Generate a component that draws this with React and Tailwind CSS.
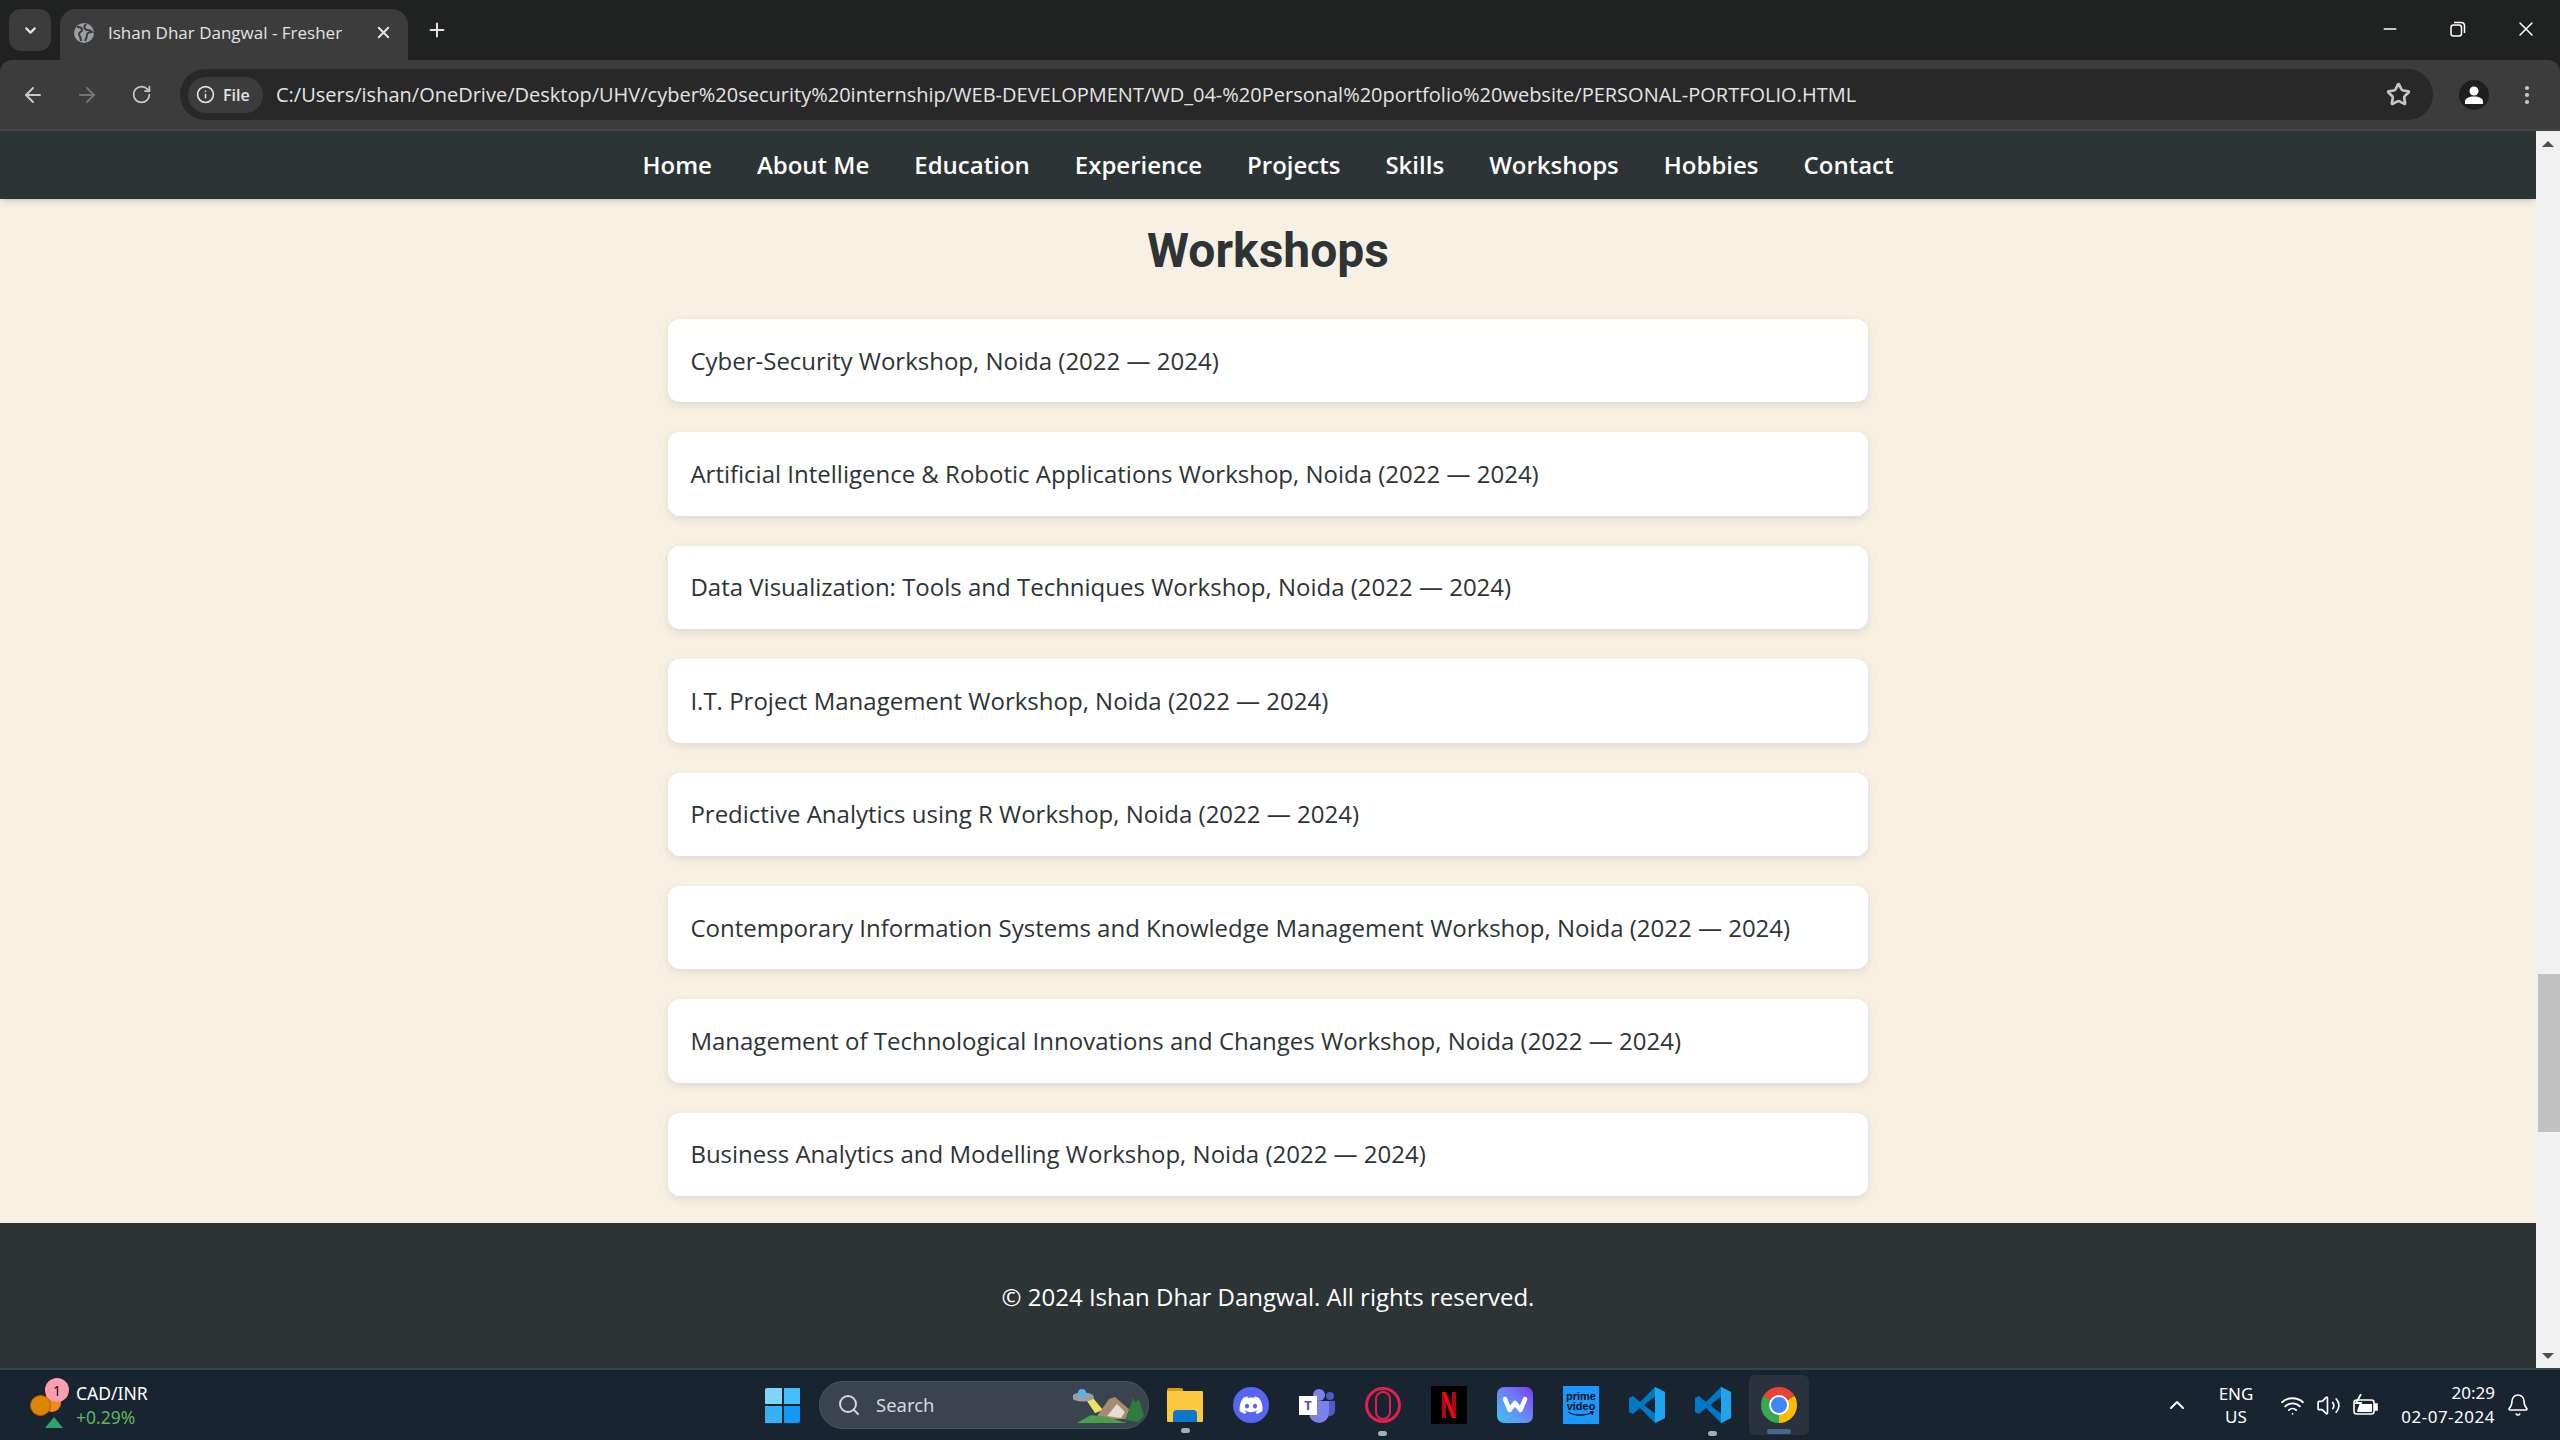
import React from "react";
import { ChevronDown, X, Plus, ArrowLeft, ArrowRight, RotateCw, Info, Star, Minus, MoreVertical, Search, ChevronUp, Wifi, Volume2, Bell } from "lucide-react";

const navLinks = ["Home", "About Me", "Education", "Experience", "Projects", "Skills", "Workshops", "Hobbies", "Contact"];

const workshops = [
  "Cyber-Security Workshop, Noida (2022 — 2024)",
  "Artificial Intelligence & Robotic Applications Workshop, Noida (2022 — 2024)",
  "Data Visualization: Tools and Techniques Workshop, Noida (2022 — 2024)",
  "I.T. Project Management Workshop, Noida (2022 — 2024)",
  "Predictive Analytics using R Workshop, Noida (2022 — 2024)",
  "Contemporary Information Systems and Knowledge Management Workshop, Noida (2022 — 2024)",
  "Management of Technological Innovations and Changes Workshop, Noida (2022 — 2024)",
  "Business Analytics and Modelling Workshop, Noida (2022 — 2024)",
];

function BrowserChrome() {
  return (
    <div className="font-['Open_Sans',sans-serif]">
      {/* tab strip */}
      <div className="h-[60px] bg-[#202222] flex items-start text-[#e3e3e3]">
        <div className="w-[42px] h-[42px] mt-[9px] ml-[9px] rounded-xl bg-[#3c3c3c] flex items-center justify-center">
          <ChevronDown size={17} strokeWidth={3} />
        </div>
        <div className="w-[348px] h-[51px] mt-[9px] ml-[9px] rounded-t-2xl bg-[#3c3c3c] flex items-center pl-[14px] pr-[15px] pb-[4px]">
          <svg width="20" height="20" viewBox="0 0 20 20" className="shrink-0">
            <circle cx="10" cy="10" r="10" fill="#9aa0a6" />
            <path d="M3 4c3 0 5 1 5 3s-3 2-3 4 2 2 2 7M12 1c-1 2-3 3-1 5s5 0 7 3c-2 0-5 1-5 3s-1 4-2 6" stroke="#3c3c3c" strokeWidth="2" fill="none" />
          </svg>
          <span className="ml-[14px] text-[17px] flex-1 whitespace-nowrap">Ishan Dhar Dangwal - Fresher</span>
          <X size={19} strokeWidth={2.5} />
        </div>
        <Plus size={22} strokeWidth={2.2} className="ml-[18px] mt-[19px]" />
        <div className="ml-auto flex items-center text-white mt-[17px]">
          <Minus size={20} strokeWidth={1.6} className="mr-[49px]" />
          <svg width="18" height="18" viewBox="0 0 18 18" fill="none" stroke="white" strokeWidth="1.5" className="mr-[47px]">
            <rect x="2" y="5" width="10.5" height="11" rx="2.5" />
            <path d="M5 2.5h7.5a3 3 0 0 1 3 3V13" />
          </svg>
          <X size={24} strokeWidth={1.5} className="mr-[22px]" />
        </div>
      </div>
      {/* toolbar */}
      <div className="h-[71px] bg-[#3c3c3c] rounded-t-xl border-b-2 border-[#464646] flex items-center text-[#c7c7c7]">
        <ArrowLeft size={24} strokeWidth={2} className="ml-[21px]" />
        <ArrowRight size={24} strokeWidth={2} className="ml-[30px] text-[#757575]" />
        <RotateCw size={21} strokeWidth={2} className="ml-[32px]" />
        <div className="ml-[28px] w-[2253px] h-[51px] rounded-full bg-[#282828] flex items-center pl-[8px] pr-[22px]">
          <div className="h-[36px] w-[75px] rounded-full bg-[#3c3c3c] flex items-center pl-[8px] gap-[8px] shrink-0 text-[#e3e3e3]">
            <Info size={19} strokeWidth={2} />
            <span className="text-[16px] font-semibold">File</span>
          </div>
          <span className="ml-[13px] text-[20px] text-[#e3e3e3] whitespace-nowrap flex-1">
            C:/Users/ishan/OneDrive/Desktop/UHV/cyber%20security%20internship/WEB-DEVELOPMENT/WD_04-%20Personal%20portfolio%20website/PERSONAL-PORTFOLIO.HTML
          </span>
          <Star size={25} strokeWidth={2.6} />
        </div>
        <div className="ml-[26px] w-[30px] h-[30px] rounded-full bg-[#1f1f1f] flex items-center justify-center">
          <svg width="20" height="20" viewBox="0 0 20 20" fill="white">
            <circle cx="10" cy="6" r="4.5" />
            <path d="M1 19v-2.5C1 13.500 5 11.500 10 11.500s9 2 9 5V19z" />
          </svg>
        </div>
        <MoreVertical size={24} strokeWidth={2.2} className="ml-[26px]" />
      </div>
    </div>
  );
}

function PortfolioPage() {
  return (
    <div className="flex-1 flex min-h-0">
      <div className="flex-1 flex flex-col min-w-0 font-['Open_Sans',sans-serif]">
        {/* site nav */}
        <nav className="h-[68px] bg-[#2d3436] flex items-center justify-center gap-[45px] shadow-md relative">
          {navLinks.map((link) => (
            <a key={link} className="text-[24px] font-semibold text-white">{link}</a>
          ))}
        </nav>
        {/* workshops section */}
        <section className="flex-1 bg-[#f7f0e3] flex flex-col items-center pt-[24px]">
          <h2 className="text-[48px] leading-[56px] font-bold text-[#2d3436] font-['Roboto',sans-serif]">Workshops</h2>
          <ul className="mt-[40px] w-[1200px] flex flex-col gap-[30px]">
            {workshops.map((item) => (
              <li key={item} className="h-[83.4px] bg-white rounded-[12px] shadow-[0_3px_10px_rgba(0,0,0,0.1)] flex items-center px-[22.4px] text-[24px] text-[#2d3436]">
                {item}
              </li>
            ))}
          </ul>
        </section>
        <footer className="h-[145px] bg-[#2d3436] flex items-center justify-center pt-[2px] text-[24px] text-white">
          © 2024 Ishan Dhar Dangwal. All rights reserved.
        </footer>
      </div>
      {/* scrollbar */}
      <div className="w-[24px] bg-[#f1f1f1] flex flex-col items-center justify-between pt-[10px] pb-[9px] relative">
        <div className="w-0 h-0 border-x-[6px] border-x-transparent border-b-[6px] border-b-[#505050]" />
        <div className="absolute top-[843px] left-[2px] right-0 h-[158px] bg-[#c1c1c1]" />
        <div className="w-0 h-0 border-x-[6px] border-x-transparent border-t-[6px] border-t-[#505050]" />
      </div>
    </div>
  );
}

function VsCode() {
  return (
    <svg width="36" height="36" viewBox="0 0 36 36">
      <path d="M26 0l10 5v26l-10 5L11 21l-7 6-4-2V11l4-2 7 6z" fill="#0078c8" />
      <path d="M26 0l10 5v26l-10 5z" fill="#1fa4f0" />
      <path d="M26 9.500L15 18l11 8.500z" fill="#182430" />
    </svg>
  );
}

// indicator pill under a running app
function RunningDot() {
  return <div className="absolute left-[13px] top-[44px] w-[9px] h-[5px] bg-[#a8adb3] rounded-full" />;
}

function TaskIcons() {
  return (
    <div className="flex items-center">
      {/* start */}
      <div className="grid grid-cols-2 gap-[2px] w-[35px] h-[35px]">
        <div className="bg-[#7fd6fb] rounded-tl-[2px]" />
        <div className="bg-[#45bdf8]" />
        <div className="bg-[#34b2f8]" />
        <div className="bg-[#1299f5] rounded-br-[2px]" />
      </div>
      {/* search */}
      <div className="ml-[19px] w-[330px] h-[48px] rounded-full bg-[#3a444e] border border-[#4c5660] flex items-center pl-[17px] text-[#d5d8db] relative">
        <Search size={24} strokeWidth={2} />
        <span className="ml-[15px] text-[18.500px]">Search</span>
        <svg width="72" height="38" viewBox="0 0 72 38" className="absolute right-[3px] top-[4px]">
          <path d="M14 15l6-3 10 12-8 3z" fill="#efe25c" />
          <ellipse cx="10" cy="11" rx="11" ry="4.500" fill="#9a9fa6" />
          <circle cx="9" cy="7" r="4" fill="#55b4ea" />
          <path d="M22 33l14-20 6-2 16 14 4 8z" fill="#a88a72" />
          <path d="M34 30l10-12 8 8-4 6z" fill="#e6ddd2" />
          <path d="M4 37l14-8 16 2 20 6z" fill="#4aa04a" />
          <path d="M52 34l6-16 2-6 2 4 4-2 5 16-6 6z" fill="#2f7a3c" />
        </svg>
      </div>
      {/* file explorer */}
      <div className="ml-[18px] relative w-[36px] h-[34px]">
        <div className="absolute left-0 top-0 w-[16px] h-[8px] bg-[#d99c08] rounded-t-[2px]" />
        <div className="absolute left-0 top-[3px] w-[36px] h-[31px] bg-[#fbc93f] rounded-[1px]" />
        <div className="absolute left-[6px] top-[22px] w-[24px] h-[12px] bg-[#0d78c9] rounded-t-[4px]" />
        <div className="absolute left-[14px] top-[40px] w-[9px] h-[5px] bg-[#a8adb3] rounded-full" />
      </div>
      {/* discord */}
      <div className="ml-[30px] w-[36px] h-[36px] rounded-full bg-[#5865f2] flex items-center justify-center">
        <svg width="24" height="18" viewBox="0 0 24 18" fill="white">
          <path d="M20 2A19 19 0 0 0 15.500.5l-.6 1.300a18 18 0 0 0-5.800 0L8.500.5A19 19 0 0 0 4 2C1 6.500.3 10.800.6 15.100A19 19 0 0 0 6.300 18l1.200-2-2-1 .5-.4a13 13 0 0 0 12 0l.5.4-2 1 1.200 2a19 19 0 0 0 5.700-2.900C24 10.100 23 5.900 20 2zM8 12.500c-1.200 0-2.100-1.100-2.100-2.400S6.800 7.700 8 7.700s2.200 1.100 2.100 2.400c0 1.300-.9 2.400-2.100 2.400zm8 0c-1.200 0-2.100-1.100-2.100-2.400s.9-2.400 2.100-2.400 2.200 1.100 2.100 2.400c0 1.300-.9 2.400-2.100 2.400z" />
        </svg>
      </div>
      {/* teams */}
      <div className="ml-[30px] relative w-[36px] h-[36px]">
        <div className="absolute left-[14px] top-[2px] w-[12px] h-[12px] rounded-full bg-[#7b83eb]" />
        <div className="absolute left-[27px] top-[5px] w-[8px] h-[8px] rounded-full bg-[#5059c9]" />
        <div className="absolute left-[25px] top-[14px] w-[11px] h-[15px] rounded-b-[6px] bg-[#5059c9]" />
        <div className="absolute left-[10px] top-[14px] w-[20px] h-[22px] rounded-b-[10px] bg-[#7b83eb]" />
        <div className="absolute left-0 top-[9px] w-[18px] h-[19px] bg-white flex items-center justify-center text-[13px] font-bold text-[#4b53bc] leading-none">T</div>
      </div>
      {/* opera */}
      <div className="ml-[30px] relative w-[36px] h-[36px] rounded-full border-[3px] border-[#e0214f] flex items-center justify-center">
        <div className="w-[16px] h-[29px] rounded-full border-[2px] border-[#e0214f]" />
        <div className="absolute left-[10px] top-[41px] w-[9px] h-[5px] bg-[#a8adb3] rounded-full" />
      </div>
      {/* netflix */}
      <div className="ml-[30px] w-[36px] h-[38px] bg-black flex items-center justify-center">
        <svg width="14" height="26" viewBox="0 0 14 26">
          <path d="M0 0h4v26l-4 .5z" fill="#b1060f" />
          <path d="M10 0h4v26l-4-.5z" fill="#b1060f" />
          <path d="M0 0h4l10 26h-4z" fill="#e50914" />
        </svg>
      </div>
      {/* wondershare */}
      <div className="ml-[30px] w-[36px] h-[36px] rounded-[7px] bg-gradient-to-tr from-[#22c7f2] to-[#7a2ef5] flex items-center justify-center">
        <svg width="26" height="18" viewBox="0 0 26 18" fill="none" stroke="white" strokeWidth="4.500" strokeLinecap="round" strokeLinejoin="round">
          <path d="M3 3l4.500 11L13 7l5.500 7L23 3" />
        </svg>
      </div>
      {/* prime video */}
      <div className="ml-[30px] w-[36px] h-[38px] bg-[#1a98ff] flex flex-col items-center text-[#0f1111] font-['Liberation_Sans',sans-serif] font-bold text-[11px] leading-[10px] pt-[5px]">
        <span>prime</span>
        <span>video</span>
        <svg width="28" height="6" viewBox="0 0 28 6" fill="none" stroke="#0f1111" strokeWidth="1.300">
          <path d="M1 1c6 4 18 4 25 0M23 1h3l-1 3" />
        </svg>
      </div>
      <div className="ml-[30px]"><VsCode /></div>
      <div className="ml-[30px] relative">
        <VsCode />
        <RunningDot />
      </div>
      {/* chrome, active */}
      <div className="ml-[18px] relative w-[60px] h-[60px] rounded-[6px] bg-[#2a333d] flex items-center justify-center">
        <div className="w-[36px] h-[36px] rounded-full bg-[conic-gradient(#ea4335_0deg_60deg,#fbbc04_60deg_180deg,#34a853_180deg_300deg,#ea4335_300deg)] flex items-center justify-center">
          <div className="w-[16px] h-[16px] rounded-full bg-[#4285f4] border-[2.500px] border-white box-content" />
        </div>
        <div className="absolute bottom-[1px] left-[18px] w-[24px] h-[5px] bg-[#47678c] rounded-full" />
      </div>
    </div>
  );
}

function Taskbar() {
  return (
    <div className="h-[72px] bg-[#182430] border-t-2 border-[#3a444c] flex items-center text-white font-['Noto_Sans',sans-serif] shrink-0">
      {/* widget */}
      <div className="w-[765px] flex items-center shrink-0 pl-[30px]">
        <div className="relative w-[40px] h-[52px]">
          <div className="absolute left-[13px] top-[15px] w-[18px] h-[18px] rounded-full bg-[#ee8a1a]" />
          <div className="absolute left-0 top-[16px] w-[21px] h-[21px] rounded-full bg-[#dd8504] border border-[#b06000]" />
          <div className="absolute left-[15px] top-[38px] w-0 h-0 border-x-[9px] border-x-transparent border-b-[11px] border-b-[#2ea36a]" />
          <div className="absolute left-[15px] top-[-1px] w-[24px] h-[24px] rounded-full bg-[#ff9db0] text-[#111] text-[14px] flex items-center justify-center">1</div>
        </div>
        <div className="ml-[6px] text-[17.500px] leading-[24px]">
          <div>CAD/INR</div>
          <div className="text-[#5cb85c]">+0.29%</div>
        </div>
      </div>
      <TaskIcons />
      {/* tray */}
      <div className="ml-auto flex items-center">
        <ChevronUp size={24} strokeWidth={2} className="-ml-[2px]" />
        <div className="text-[17px] leading-[23px] text-center ml-[26px] w-[42px]">
          <div>ENG</div>
          <div>US</div>
        </div>
        <Wifi size={25} strokeWidth={1.8} className="ml-[23px]" />
        <Volume2 size={25} strokeWidth={1.6} className="ml-[11px]" />
        <svg width="26" height="22" viewBox="0 0 26 22" fill="none" stroke="white" strokeWidth="1.600" className="ml-[11px]">
          <rect x="2" y="6" width="20" height="14" rx="2.500" />
          <path d="M8 10h12v8H5z" fill="white" stroke="none" />
          <path d="M23 10h2v6h-2z" fill="white" />
          <path d="M9 0L4 9h5l-3 8" stroke="white" strokeWidth="1.800" />
        </svg>
        <div className="text-[17px] leading-[24px] text-right ml-[17px] w-[100px]">
          <div>20:29</div>
          <div className="whitespace-nowrap tracking-[0.5px]">02-07-2024</div>
        </div>
        <Bell size={24} strokeWidth={1.600} className="ml-[11px] mr-[30px]" />
      </div>
    </div>
  );
}

export default function App() {
  return (
    <div className="w-[2560px] h-[1440px] flex flex-col overflow-hidden bg-[#202222]">
      <BrowserChrome />
      <PortfolioPage />
      <Taskbar />
    </div>
  );
}
